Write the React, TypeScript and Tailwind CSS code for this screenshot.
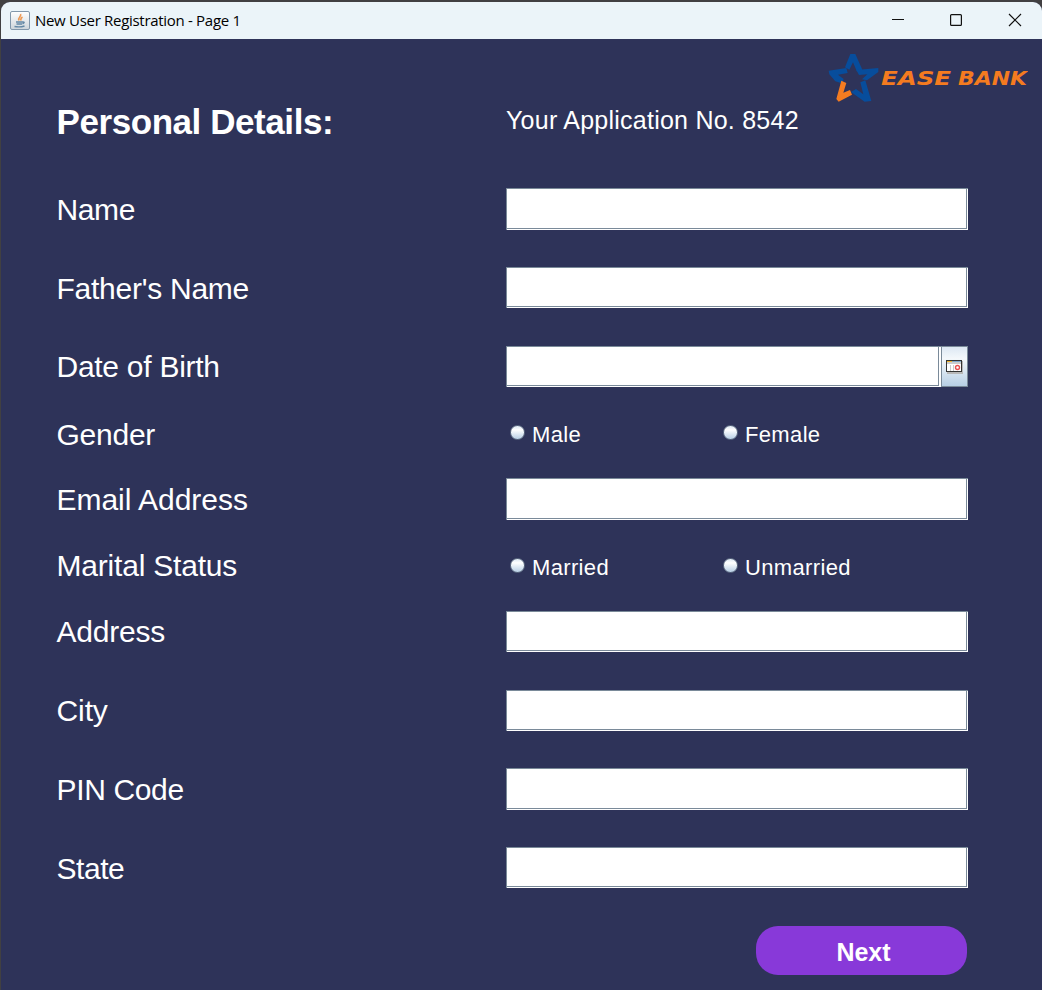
import type { ReactNode } from "react";

function Field({ h }: { h: string }) {
  return (
    <div className={`w-[462px] ${h} bg-white border-l border-t border-[#7a8a99] pr-px pb-px`}>
      <input className="block w-full h-full bg-white border-r border-b border-[#7a8a99] outline-none px-1 text-black" />
    </div>
  );
}

function Radio({ label }: { label: string }) {
  return (
    <label className="flex items-center w-[213px] h-full pl-[4px] text-[22px] tracking-[0.35px]">
      <span className="w-[15px] h-[15px] -mt-[3px] mr-[7px] rounded-full border border-[#5d6b82] bg-linear-to-b from-[#dde8f3] via-white via-30% to-[#b8cfe5]" />
      {label}
    </label>
  );
}

type RowProps = { label: string; h: string; text?: string; children: ReactNode };

function Row({ label, h, text = "leading-[43px] tracking-[-0.25px]", children }: RowProps) {
  return (
    <div className={`flex ${h} shrink-0 items-start`}>
      <div className={`w-[450px] h-[42px] pl-[0.5px] text-[30px] ${text}`}>{label}</div>
      {children}
    </div>
  );
}

function Logo() {
  return (
    <svg width="200" height="50" viewBox="828 53 200 50">
      <g transform="translate(820 45) scale(.3333)" fill="#074d9c">
        <path d="M91 27H106L127 74L111 80L99 52L88 74L75 67Z" />
        <path d="M26 77L79 69L83 84L54 89L71 102L65 115L46 109L28 88Z" />
        <path d="M109 75L175 69V81L141 106L126 103L142 88L117 90Z" />
        <path d="M136 106L154 168L134 170L93 141L108 132L130 148L121 112Z" />
        <path d="M64 107L79 114L70 143L90 135L96 149L56 170L49 162Z" fill="#f47b20" />
      </g>
      <g fill="#f47b20" fontFamily="DejaVu Sans" fontWeight="700" fontStyle="italic" fontSize="20">
        <text x="881" y="85.2" textLength="70" lengthAdjust="spacingAndGlyphs">EASE</text>
        <text x="958" y="85.2" textLength="69" lengthAdjust="spacingAndGlyphs">BANK</text>
      </g>
    </svg>
  );
}

export default function App() {
  return (
    <div className="w-[1042px] h-[990px] overflow-hidden bg-[#414042] pt-[2px] pl-px font-['Liberation_Sans',sans-serif] text-white">
      <div className="flex flex-col h-full rounded-t-[9px] overflow-hidden bg-[#2e3359]">
        <header className="flex items-center h-[37px] shrink-0 bg-[#ebf4f9] text-black pl-[9px]">
          <svg width="20" height="20" viewBox="0 0 20 20" fill="none">
            <defs>
              <linearGradient id="cup" x2="0" y2="1">
                <stop stopColor="#fff" />
                <stop offset="1" stopColor="#cdd4da" />
              </linearGradient>
            </defs>
            <rect x=".5" y=".5" width="19" height="18" rx="1.5" fill="url(#cup)" stroke="#8297ab" />
            <path d="M10.5 3C12 5.5 7.5 6 9 9.5M12.5 6C10 7.5 11.5 8 10.5 9.5" stroke="#ed9852" strokeWidth="1.6" />
            <path d="M6 11H13M6.5 13H12M4.5 15.5Q10 16.5 14.5 15M13 11Q15.5 11 12.5 13" stroke="#6488a5" strokeWidth="1.4" />
          </svg>
          <span className="ml-[5px] text-[15px] font-['Open_Sans',sans-serif] tracking-[-0.3px]">New User Registration - Page 1</span>
          <svg className="ml-auto" width="151" height="37" viewBox="891 2 151 37" fill="none" stroke="#111" strokeWidth="1.2">
            <path d="M892 19.5H904M1009 14L1021 26M1021 14L1009 26" />
            <rect x="950.6" y="14.6" width="10.8" height="10.8" rx="1" />
          </svg>
        </header>
        <div className="flex justify-end h-[64px] shrink-0 pt-[14px] pr-[14px]">
          <Logo />
        </div>
        <div className="flex h-[85px] shrink-0 pl-[55px]">
          <h1 className="w-[450px] pl-[0.5px] text-[35px] leading-[38px] tracking-[-0.43px] font-bold">Personal Details:</h1>
          <div className="text-[25px] leading-[35px] tracking-[0.24px]">Your Application No. 8542</div>
        </div>
        <main className="flex flex-col h-[738px] shrink-0 pl-[55px]">
          <Row label="Name" h="h-[79px]" text="leading-[43px] tracking-[-0.4px]"><Field h="h-[42px]" /></Row>
          <Row label="Father's Name" h="h-[79px]"><Field h="h-[41px]" /></Row>
          <Row label="Date of Birth" h="h-[68px]" text="leading-[41px] tracking-[-0.27px]">
            <div className="flex w-[462px] h-[41px]">
              <div className="w-[435px] h-[41px] bg-white border-l border-t border-[#7a8a99] pr-[2px] pb-px">
                <input className="block w-full h-full bg-white border-r border-b border-[#7a8a99] outline-none px-1 text-black" />
              </div>
              <button className="flex w-[27px] h-[41px] items-center justify-center border border-[#7a8a99] bg-linear-to-b from-[#dde8f3] via-[#f4f8fb] via-30% to-[#b8cfe5]">
                <svg width="17" height="14" viewBox="0 0 17 14" shapeRendering="crispEdges">
                  <path d="M1 1H17V14H1Z" fill="#b8b8b8" />
                  <path d="M0 0H16V12H0Z" fill="#333" />
                  <path d="M1 1H15V11H1Z" fill="#fff" />
                  <path d="M1 1H6V2H1Z" fill="#f0b429" />
                  <path d="M6 1H15V2H6Z" fill="#7fa9cc" />
                  <path d="M1 2H15V4H1ZM4 5H5V11H4ZM7 5H8V11H7Z" fill="#ccc" />
                  <circle cx="11.5" cy="7.5" r="2" fill="none" stroke="#e85050" strokeWidth="1.4" shapeRendering="auto" />
                </svg>
              </button>
            </div>
          </Row>
          <Row label="Gender" h="h-[64px]" text="leading-[41px] tracking-[-0.25px]"><div className="flex h-[40px]"><Radio label="Male" /><Radio label="Female" /></div></Row>
          <Row label="Email Address" h="h-[68px]" text="leading-[43px] tracking-[-0.03px]"><Field h="h-[42px]" /></Row>
          <Row label="Marital Status" h="h-[65px]" text="leading-[39px] tracking-[-0.2px]"><div className="flex h-[42px]"><Radio label="Married" /><Radio label="Unmarried" /></div></Row>
          <Row label="Address" h="h-[79px]" text="leading-[41px] tracking-[-0.2px]"><Field h="h-[41px]" /></Row>
          <Row label="City" h="h-[78px]" text="leading-[41px] tracking-[-0.1px]"><Field h="h-[41px]" /></Row>
          <Row label="PIN Code" h="h-[79px]" text="leading-[43px] tracking-[-0.35px]"><Field h="h-[42px]" /></Row>
          <Row label="State" h="h-[79px]" text="leading-[43px] tracking-[-0.45px]"><Field h="h-[41px]" /></Row>
        </main>
        <button className="self-end mr-[75px] w-[211px] h-[49px] shrink-0 rounded-[22px] bg-[#8839d9] text-[25px] leading-[46px] font-bold pt-[3px] pl-[4px]">Next</button>
      </div>
    </div>
  );
}
